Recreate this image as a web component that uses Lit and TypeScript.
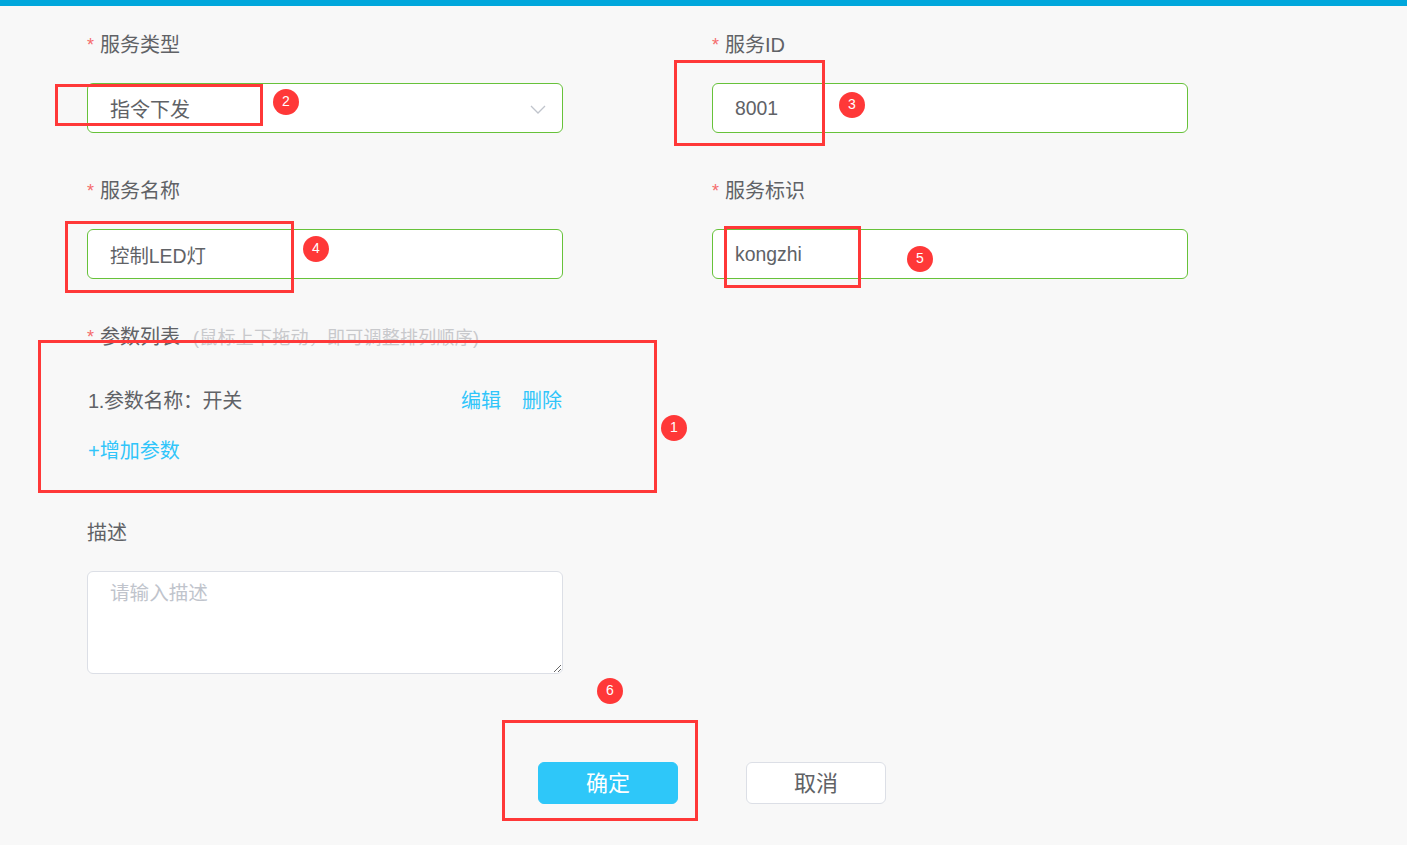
import { LitElement, html, css } from "lit";
import { customElement } from "lit/decorators.js";

const boxes = [
  { x: 55, y: 84, w: 208, h: 42 },
  { x: 674, y: 60, w: 151, h: 86 },
  { x: 65, y: 221, w: 229, h: 72 },
  { x: 724, y: 226, w: 137, h: 62 },
  { x: 38, y: 340, w: 619, h: 153 },
  { x: 502, y: 720, w: 196, h: 101 },
];
const badges = [
  { n: 1, x: 674, y: 428 },
  { n: 2, x: 286, y: 102 },
  { n: 3, x: 852, y: 105 },
  { n: 4, x: 316, y: 249 },
  { n: 5, x: 920, y: 259 },
  { n: 6, x: 610, y: 691 },
];

@customElement("app-root")
export class AppRoot extends LitElement {
  static styles = css`
    :host {
      display: block;
      position: relative;
      min-height: 845px;
      overflow: hidden;
      background: #f8f8f8;
      color: #606266;
      font-family: "Liberation Sans", "Noto Sans CJK SC", sans-serif;
      font-size: 20px;
    }
    * { box-sizing: border-box; }
    .topbar { height: 6px; background: #00a7dc; }
    .form { padding: 18px 0 0 87px; display: flex; flex-direction: column; gap: 37px; }
    .row { display: grid; grid-template-columns: 476px 476px; column-gap: 149px; }
    .label { height: 40px; line-height: 42px; margin-bottom: 19px; white-space: nowrap; }
    .star { color: #f56c6c; margin-right: 6px; font-size: 18px; vertical-align: 1px; }
    .hint { color: #c8c9cc; font-size: 18px; margin-left: 13px; letter-spacing: 0.25px; }
    .input {
      display: block;
      width: 100%;
      height: 50px;
      border: 1px solid #67c23a;
      border-radius: 6px;
      background: #fff;
      padding: 0 22px;
      font: inherit;
      font-size: 19.4px;
      color: #606266;
      outline: none;
    }
    .select { display: flex; align-items: center; justify-content: space-between; font-size: 20px; padding-right: 16px; }
    .select svg { width: 16px; height: 9px; margin-top: 2px; }
    .param { display: flex; justify-content: space-between; height: 50px; line-height: 52px; padding: 0 1px; }
    .name { letter-spacing: -0.3px; }
    .links { display: flex; gap: 21px; color: #30c5fa; }
    .add { height: 50px; line-height: 52px; color: #30c5fa; padding-left: 1px; }
    textarea {
      display: block;
      width: 476px;
      height: 103px;
      border: 1px solid #dcdfe6;
      border-radius: 6px;
      background: #fff;
      padding: 9px 22px;
      font: inherit;
      font-size: 19.6px;
      line-height: 24px;
      color: #606266;
      outline: none;
    }
    textarea::placeholder { color: #c0c4cc; opacity: 1; }
    .actions { display: flex; gap: 68px; margin: 51px 0 0 451px; }
    button {
      width: 140px;
      height: 42px;
      border-radius: 6px;
      font: inherit;
      font-size: 22px;
      padding: 0 0 4px;
      color: #606266;
      background: #fff;
      border: 1px solid #dcdfe6;
    }
    button.primary { background: #2ec7f9; border-color: #2ec7f9; color: #fff; }
    .box { position: absolute; border: 3px solid #ff3838; pointer-events: none; }
    .badge {
      position: absolute;
      width: 26px;
      height: 26px;
      margin: -13px 0 0 -13px;
      border-radius: 50%;
      background: #ff3838;
      color: #fff;
      font-size: 14px;
      line-height: 24px;
      text-align: center;
    }
  `;

  private label(text: string, hint = "", required = true) {
    return html`<div class="label">${required ? html`<span class="star">*</span>` : ""}${text}${hint
      ? html`<span class="hint">${hint}</span>`
      : ""}</div>`;
  }

  render() {
    return html`
      <div class="topbar"></div>
      <div class="form">
        <div class="row">
          <div>
            ${this.label("服务类型")}
            <div class="input select">
              <span>指令下发</span>
              <svg viewBox="0 0 16 9" fill="none" stroke="#c0c4cc" stroke-width="1.3"><path d="M1 1l7 7 7-7" /></svg>
            </div>
          </div>
          <div>${this.label("服务ID")}<input class="input" .value=${"8001"} /></div>
        </div>
        <div class="row">
          <div>${this.label("服务名称")}<input class="input" .value=${"控制LED灯"} /></div>
          <div>${this.label("服务标识")}<input class="input" .value=${"kongzhi"} /></div>
        </div>
        <div class="row">
          <div>
            ${this.label("参数列表", "(鼠标上下拖动，即可调整排列顺序)")}
            <div class="param">
              <span class="name">1.参数名称：开关</span>
              <span class="links"><span>编辑</span><span>删除</span></span>
            </div>
            <div class="add">+增加参数</div>
          </div>
        </div>
        <div class="row">
          <div>${this.label("描述", "", false)}<textarea placeholder="请输入描述"></textarea></div>
        </div>
        <div class="actions">
          <button class="primary">确定</button>
          <button>取消</button>
        </div>
      </div>
      ${boxes.map(
        (b) => html`<div class="box" style="left:${b.x}px;top:${b.y}px;width:${b.w}px;height:${b.h}px"></div>`
      )}
      ${badges.map((b) => html`<div class="badge" style="left:${b.x}px;top:${b.y}px">${b.n}</div>`)}
    `;
  }
}
